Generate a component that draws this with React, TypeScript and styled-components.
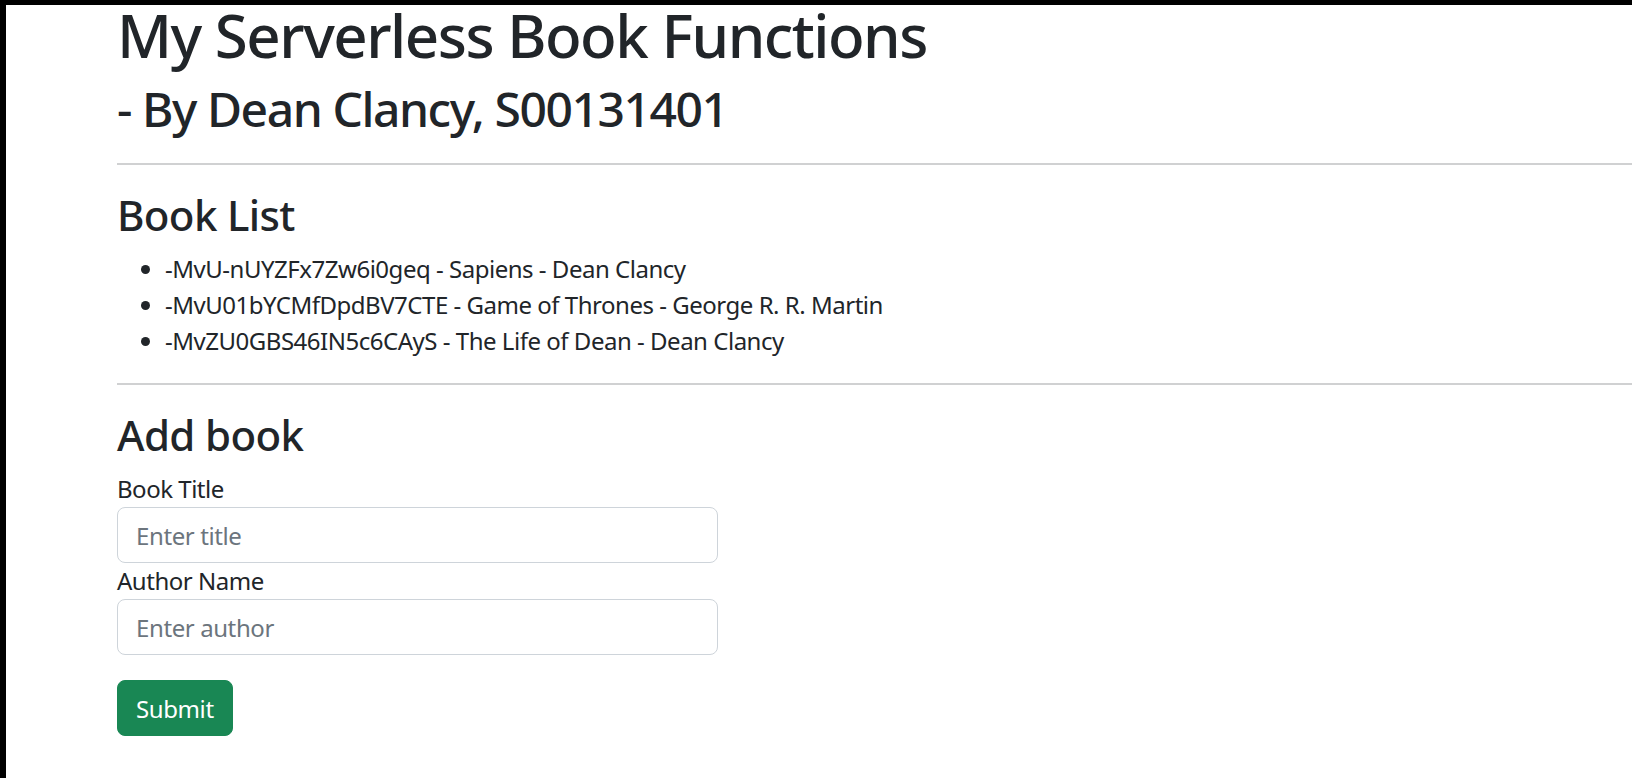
import React from "react";
import styled, { createGlobalStyle } from "styled-components";

const Global = createGlobalStyle`
  html { margin: 0; padding: 0; background: #000; }
  body {
    margin: 5px 0 0 6px;
    padding: 0;
    background: #fff;
    min-height: calc(100vh - 5px);
    font-family: "Noto Sans", "Open Sans", sans-serif;
    color: #212529;
    letter-spacing: -0.48px;
  }
  * { box-sizing: border-box; }
`;

const Page = styled.main`
  display: flex;
  flex-direction: column;
  padding-left: 111px;
`;

const Title = styled.h1`
  margin: 0;
  font-size: 60px;
  line-height: 60px;
  font-weight: 500;
  letter-spacing: -0.025em;
`;

const Subtitle = styled.h2`
  margin: 20px 0 0;
  font-size: 48px;
  line-height: 48px;
  font-weight: 500;
  letter-spacing: -0.03em;
`;

const Rule = styled.hr<{ $top: number }>`
  margin: ${(p) => p.$top}px 0 0;
  border: 0;
  height: 2px;
  background: #d0d1d2;
`;

const SectionTitle = styled.h3`
  margin: 29px 0 0;
  font-size: 42px;
  line-height: 42px;
  font-weight: 500;
  letter-spacing: -0.015em;
`;

const BookList = styled.ul`
  margin: 15px 0 0;
  padding-left: 48px;
  font-size: 24px;
  line-height: 36px;
  list-style: disc;
`;

const Form = styled.form`
  display: flex;
  flex-direction: column;
  align-items: flex-start;
  margin-top: 15px;
`;

const Label = styled.label`
  font-size: 24px;
  line-height: 36px;
`;

const Input = styled.input`
  width: 601px;
  height: 56px;
  padding: 0 18px;
  font-family: inherit;
  font-size: 24px;
  letter-spacing: -0.4px;
  color: #212529;
  background: #fff;
  border: 1px solid #ced4da;
  border-radius: 8px;
  outline: none;
  &::placeholder { color: #6c757d; }
`;

const SubmitButton = styled.button`
  margin-top: 25px;
  height: 56px;
  padding: 0 18px;
  font-family: inherit;
  font-size: 24px;
  letter-spacing: -0.4px;
  color: #fff;
  background: #198754;
  border: 1px solid #198754;
  border-radius: 8px;
  cursor: pointer;
`;

const books = [
  "-MvU-nUYZFx7Zw6i0geq - Sapiens - Dean Clancy",
  "-MvU01bYCMfDpdBV7CTE - Game of Thrones - George R. R. Martin",
  "-MvZU0GBS46IN5c6CAyS - The Life of Dean - Dean Clancy",
];

export default function App() {
  return (
    <>
      <Global />
      <Page>
        <Title>My Serverless Book Functions</Title>
        <Subtitle>- By Dean Clancy, S00131401</Subtitle>
        <Rule $top={30} />
        <SectionTitle>Book List</SectionTitle>
        <BookList>
          {books.map((b) => (
            <li key={b}>{b}</li>
          ))}
        </BookList>
        <Rule $top={24} />
        <SectionTitle>Add book</SectionTitle>
        <Form onSubmit={(e) => e.preventDefault()}>
          <Label htmlFor="title">Book Title</Label>
          <Input id="title" placeholder="Enter title" />
          <Label htmlFor="author">Author Name</Label>
          <Input id="author" placeholder="Enter author" />
          <SubmitButton type="submit">Submit</SubmitButton>
        </Form>
      </Page>
    </>
  );
}
